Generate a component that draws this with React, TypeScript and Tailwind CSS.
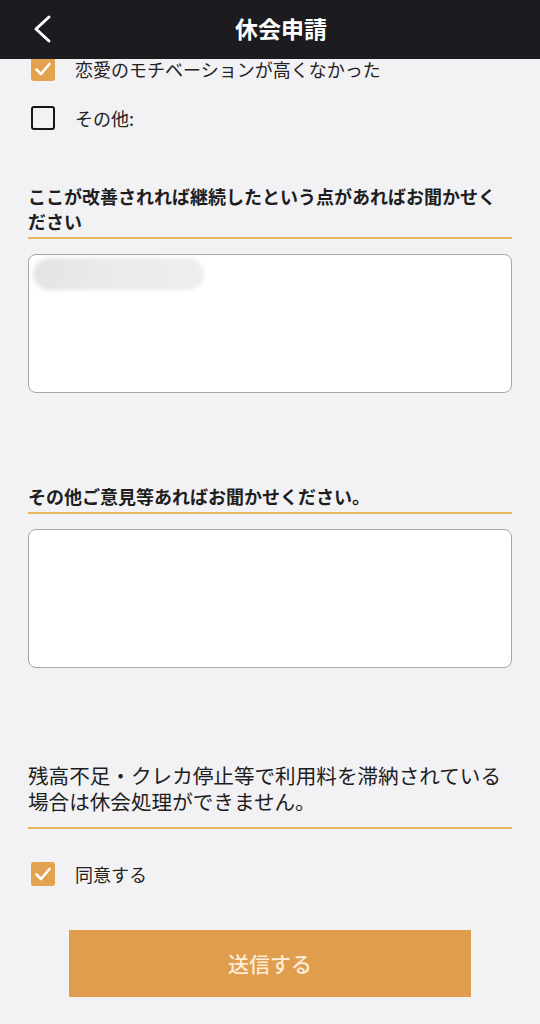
import React from "react";

const jp = { fontFamily: '"Noto Sans CJK JP", "Noto Sans", sans-serif' };

function Check() {
  return (
    <svg viewBox="0 0 24 24" className="h-[24px] w-[24px]">
      <polyline
        points="5.5,12.5 10,17 18.5,7"
        fill="none"
        stroke="#ffffff"
        strokeWidth="2.6"
        strokeLinecap="round"
        strokeLinejoin="round"
      />
    </svg>
  );
}

function CheckRow({ label, checked }: { label: string; checked?: boolean }) {
  return (
    <div className="flex h-[49px] items-center pl-[3px]">
      {checked ? (
        <span className="flex h-[24px] w-[24px] items-center justify-center rounded-[3px] bg-[#e3a24f]">
          <Check />
        </span>
      ) : (
        <span className="h-[24px] w-[24px] rounded-[3px] border-[2.5px] border-[#161616] bg-transparent" />
      )}
      <span className="ml-[20px] text-[18px] leading-[24px] text-[#222222]">{label}</span>
    </div>
  );
}

function Heading({ children, className = "" }: { children: React.ReactNode; className?: string }) {
  return (
    <h2
      className={`border-b-2 border-[#e9b55c] pb-[3px] text-[18px] font-bold leading-[25px] text-[#1e1e1e] ${className}`}
    >
      {children}
    </h2>
  );
}

export default function App() {
  return (
    <div className="relative min-h-[1024px] w-full overflow-hidden bg-[#f2f1f4]" style={jp}>
      {/* header sits over scrolled content */}
      <header className="absolute inset-x-0 top-0 z-10 flex h-[59px] items-center justify-center bg-[#1c1b1f]">
        <button className="absolute left-[30px] top-[12px] p-[2px]">
          <svg viewBox="0 0 20 30" className="h-[30px] w-[20px]">
            <polyline
              points="17,3 4,15 17,27"
              fill="none"
              stroke="#ffffff"
              strokeWidth="3"
              strokeLinecap="round"
              strokeLinejoin="round"
            />
          </svg>
        </button>
        <h1 className="-mt-[2px] ml-[22px] text-[23px] font-bold leading-none text-white">休会申請</h1>
      </header>

      <main className="px-7 pb-7 pt-[44px]">
        <CheckRow label="恋愛のモチベーションが高くなかった" checked />
        <CheckRow label="その他:" />

        <Heading className="mt-[42px]">
          ここが改善されれば継続したという点があればお聞かせください
        </Heading>
        <div className="mt-[15px] h-[139px] rounded-[8px] border-[1.5px] border-[#a6a6a6] bg-white pl-[4px] pt-[3px]">
          <div className="h-[32px] w-[171px] rounded-full bg-gradient-to-r from-[#e4e4e4] via-[#ebebeb] to-[#eeeeee] blur-[2px]" />
        </div>

        <Heading className="mt-[91px]">その他ご意見等あればお聞かせください。</Heading>
        <div className="mt-[15px] h-[139px] rounded-[8px] border-[1.5px] border-[#a6a6a6] bg-white" />

        <p className="mt-[94px] border-b-2 border-[#e9b55c] pb-[13px] text-[20.6px] leading-[26px] text-[#1e1e1e]">
          残高不足・クレカ停止等で利用料を滞納されている場合は休会処理ができません。
        </p>

        <div className="mt-[20px]">
          <CheckRow label="同意する" checked />
        </div>

        <button className="mx-auto mt-[32px] flex h-[67px] w-[402px] items-center justify-center bg-[#e09d4e] text-[21px] font-medium text-[#fcecd8]">
          送信する
        </button>
      </main>
    </div>
  );
}
